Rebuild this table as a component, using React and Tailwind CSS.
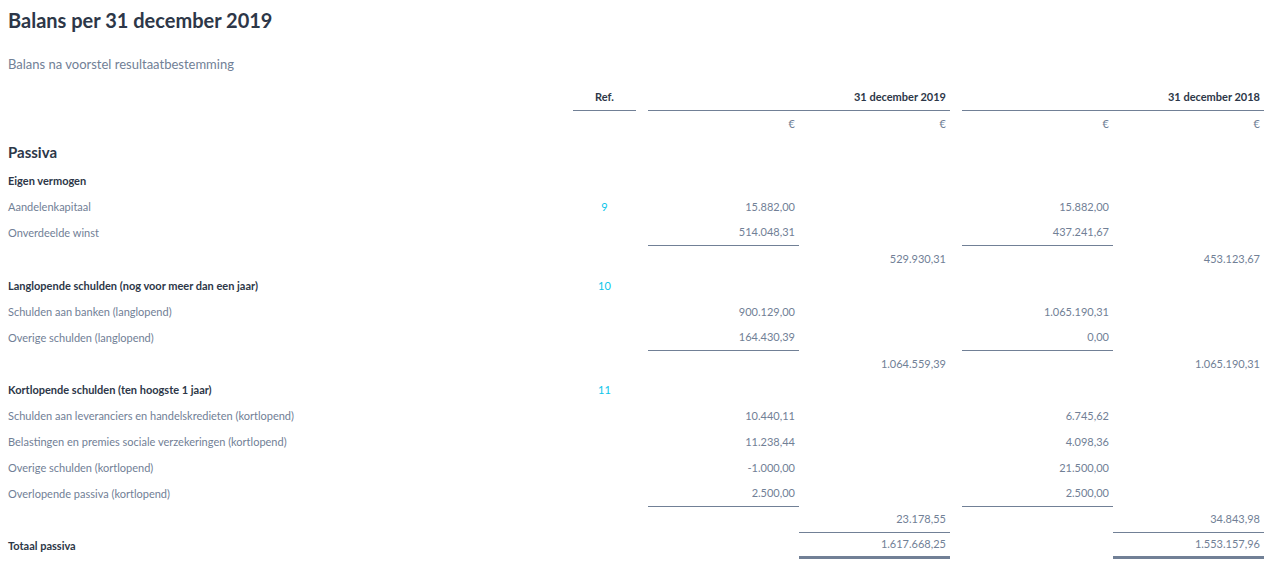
import React from "react";

const F = { fontFamily: "Lato, 'Open Sans', sans-serif" };

function Row({ label, bold, refNo, a, b, c, d, lineA, lineB, lineC, lineD, dbl, tall }) {
  const cell = "w-[151px] h-full flex items-center justify-end pr-[4px]";
  return (
    <div className={"flex items-stretch text-[11px] text-[#718096] " + (tall ? "h-[27px]" : "h-[26px]")}>
      <div className={"flex-1 flex items-center " + (bold ? "font-bold text-[#2d3748]" : "")}>{label}</div>
      <div className="w-[63px] flex items-center justify-center text-[#0bc5ea]">{refNo}</div>
      <div className="w-[12px]" />
      <div className={cell + (lineA ? " border-b border-[#718096]" : "")}>{a}</div>
      <div className={cell + (lineB ? " border-b border-[#718096]" : "") + (dbl ? " border-b-[3px] border-[#718096]" : "")}>{b}</div>
      <div className="w-[12px]" />
      <div className={cell + (lineC ? " border-b border-[#718096]" : "")}>{c}</div>
      <div className={cell + (lineD ? " border-b border-[#718096]" : "") + (dbl ? " border-b-[3px] border-[#718096]" : "")}>{d}</div>
    </div>
  );
}

export default function App() {
  return (
    <div style={F} className="bg-white w-[1274px] h-[574px] overflow-hidden pl-[8px] pr-[10px] pt-[6px]">
      <h1 className="text-[20px] leading-[28px] font-bold text-[#2d3748]">Balans per 31 december 2019</h1>
      <p className="mt-[20px] text-[13px] leading-[20px] text-[#718096]">Balans na voorstel resultaatbestemming</p>

      <div className="mt-[11px] flex h-[26px] items-stretch text-[11px] font-bold text-[#2d3748]">
        <div className="flex-1" />
        <div className="w-[63px] flex items-center justify-center border-b border-[#718096]">Ref.</div>
        <div className="w-[12px]" />
        <div className="w-[302px] flex items-center justify-end pr-[4px] border-b border-[#718096]">31 december 2019</div>
        <div className="w-[12px]" />
        <div className="w-[302px] flex items-center justify-end pr-[4px] border-b border-[#718096]">31 december 2018</div>
      </div>
      <Row a="€" b="€" c="€" d="€" />

      <div className="flex h-[31px] items-center text-[15px] font-bold text-[#2d3748]">Passiva</div>

      <Row label="Eigen vermogen" bold />
      <Row label="Aandelenkapitaal" refNo="9" a="15.882,00" c="15.882,00" />
      <Row label="Onverdeelde winst" a="514.048,31" c="437.241,67" lineA lineC />
      <Row b="529.930,31" d="453.123,67" tall />
      <Row label="Langlopende schulden (nog voor meer dan een jaar)" bold refNo="10" />
      <Row label="Schulden aan banken (langlopend)" a="900.129,00" c="1.065.190,31" />
      <Row label="Overige schulden (langlopend)" a="164.430,39" c="0,00" lineA lineC />
      <Row b="1.064.559,39" d="1.065.190,31" />
      <Row label="Kortlopende schulden (ten hoogste 1 jaar)" bold refNo="11" />
      <Row label="Schulden aan leveranciers en handelskredieten (kortlopend)" a="10.440,11" c="6.745,62" />
      <Row label="Belastingen en premies sociale verzekeringen (kortlopend)" a="11.238,44" c="4.098,36" />
      <Row label="Overige schulden (kortlopend)" a="-1.000,00" c="21.500,00" />
      <Row label="Overlopende passiva (kortlopend)" a="2.500,00" c="2.500,00" lineA lineC />
      <Row b="23.178,55" d="34.843,98" lineB lineD />
      <Row label="Totaal passiva" bold b="1.617.668,25" d="1.553.157,96" dbl />
    </div>
  );
}
